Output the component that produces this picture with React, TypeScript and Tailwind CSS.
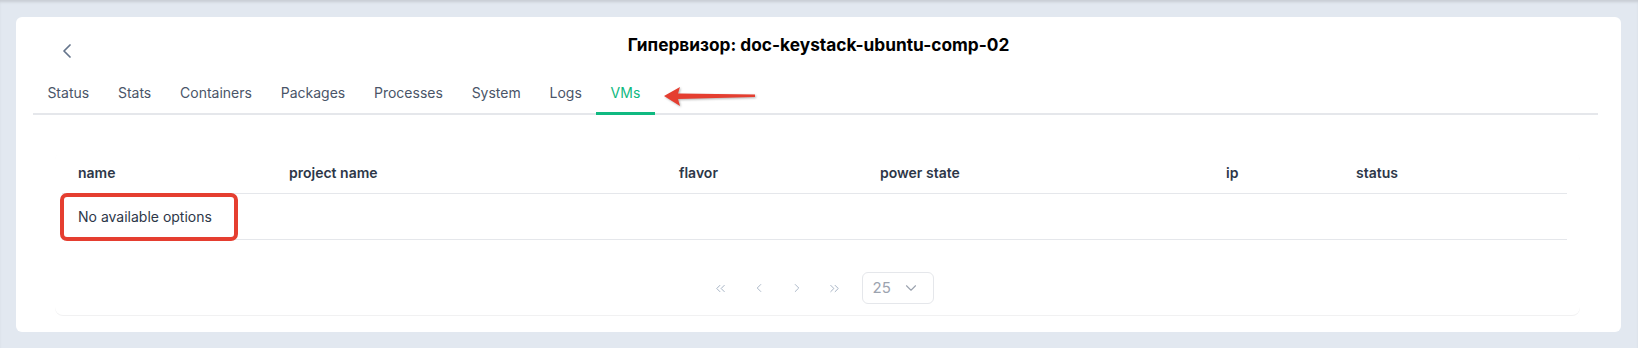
import { ChevronLeft, ChevronRight, ChevronsLeft, ChevronsRight, ChevronDown } from 'lucide-react';

const tabs = ['Status', 'Stats', 'Containers', 'Packages', 'Processes', 'System', 'Logs', 'VMs'];
const columns = ['name', 'project name', 'flavor', 'power state', 'ip', 'status'];

function RedArrow() {
  return (
    <svg
      width="94"
      height="24"
      viewBox="0 0 94 24"
      className="absolute left-[630px] top-[13px] drop-shadow-[1px_1px_1px_rgba(0,0,0,0.3)]"
    >
      <polygon points="1,11 17,2 15,8.5 92,9.5 92,12 15,14 17,21" fill="#e53e30" />
    </svg>
  );
}

export default function App() {
  return (
    <div className="h-[348px] w-full bg-[#e2e8f0] pl-4 pr-[17px] pt-[17px] pb-4 font-[Inter,sans-serif] shadow-[inset_0_3px_3px_-1px_rgba(0,0,0,0.12)]">
      <div className="h-[315px] rounded-md bg-white pt-[14px]">
        {/* Header: back + title */}
        <div className="grid h-[28px] grid-cols-[1fr_auto_1fr]">
          <div className="pl-[39px] pt-[8px]">
            <ChevronLeft size={24} strokeWidth={1.75} className="text-[#64748b]" />
          </div>
          <h1 className="text-[17.3px] font-bold leading-[28px] text-black">
            Гипервизор: doc-keystack-ubuntu-comp-02
          </h1>
          <div />
        </div>

        {/* Tabs */}
        <div className="relative ml-[17px] mr-[23px] mt-[13px] flex border-b-2 border-[#e5e7eb]">
          {tabs.map((t) => (
            <div
              key={t}
              className={`-mb-[2px] flex h-[43px] items-center border-b-[3px] px-[14.4px] text-[14px] ${
                t === 'VMs' ? 'border-[#10b981] text-[#10b981]' : 'border-transparent text-[#4a5568]'
              }`}
            >
              {t}
            </div>
          ))}
          <RedArrow />
        </div>

        {/* Table + pagination */}
        <div className="ml-[39px] mr-[41px] mt-[37px] rounded-lg pb-[11px] shadow-[0_1px_0_rgba(15,23,42,0.06)]">
          <div className="ml-[7px] mr-[13px]">
            <div className="grid h-[42px] grid-cols-[211px_390px_201px_346px_130px_1fr] items-center border-b border-[#e5e7eb]">
              {columns.map((c) => (
                <div key={c} className="px-4 text-[14px] font-semibold text-[#2d3748]">
                  {c}
                </div>
              ))}
            </div>
            <div className="relative flex h-[46px] items-center border-b border-[#e5e7eb]">
              <div className="px-4 text-[14px] text-[#2d3748]">No available options</div>
              <div className="absolute -left-[2px] -top-[1px] h-[48px] w-[178px] rounded-[7px] border-[4px] border-[#e53e30]" />
            </div>
          </div>

          <div className="mt-[32px] flex h-8 items-center justify-center text-[#a0aec0]">
            <button className="flex w-[38px] justify-center">
              <ChevronsLeft size={15} strokeWidth={1.5} />
            </button>
            <button className="flex w-[38px] justify-center">
              <ChevronLeft size={14} strokeWidth={1.5} />
            </button>
            <button className="flex w-[38px] justify-center">
              <ChevronRight size={14} strokeWidth={1.5} />
            </button>
            <button className="flex w-[38px] justify-center">
              <ChevronsRight size={15} strokeWidth={1.5} />
            </button>
            <div className="ml-[8px] flex h-8 w-[72px] items-center justify-between rounded-md border border-[#e5e7eb] pl-[10px] pr-[13px]">
              <span className="text-[15px] text-[#9ca3af]">25</span>
              <ChevronDown size={18} strokeWidth={1.5} className="text-[#9ca3af]" />
            </div>
          </div>
        </div>
      </div>
    </div>
  );
}
